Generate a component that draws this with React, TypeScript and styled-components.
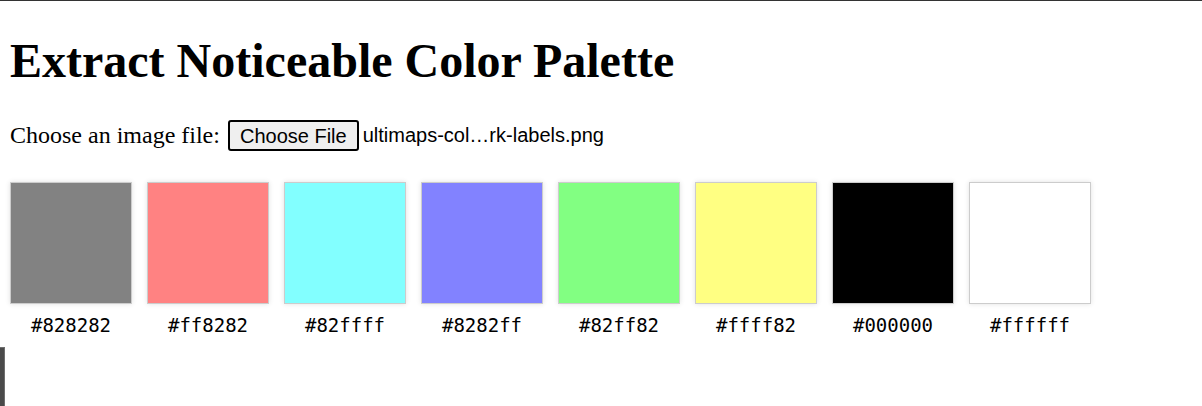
import React from "react";
import styled, { createGlobalStyle } from "styled-components";

const Global = createGlobalStyle`
  html, body { margin: 0; padding: 0; background: #fff; }
  body {
    border-top: 1px solid #333;
    font-family: "Liberation Serif", "Times New Roman", serif;
    font-size: 24px;
    color: #000;
    min-height: 405px;
    overflow: hidden;
  }
`;

const Page = styled.div`
  padding: 0 10px;
`;

const Title = styled.h1`
  font-size: 48px;
  font-weight: bold;
  margin: 32px 0 32px;
  line-height: normal;
`;

const FileRow = styled.div`
  display: flex;
  align-items: center;
  gap: 8px;
`;

const FileButton = styled.button`
  font-family: "Liberation Sans", Arial, sans-serif;
  font-size: 20px;
  height: 31px;
  padding: 0 10px;
  background: #efefef;
  border: 2px solid #000;
  border-radius: 3px;
  color: #000;
  line-height: 1;
`;

const FileName = styled.span`
  font-family: "Liberation Sans", Arial, sans-serif;
  font-size: 20px;
  margin-left: -4px;
`;

const Palette = styled.div`
  display: flex;
  gap: 15px;
  margin-top: 31px;
`;

const Item = styled.div`
  display: flex;
  flex-direction: column;
  align-items: center;
  gap: 10px;
`;

const Swatch = styled.div<{ $color: string }>`
  width: 120px;
  height: 120px;
  border: 1px solid #ccc;
  background: ${(p) => p.$color};
  box-shadow: 0 0 5px rgba(0, 0, 0, 0.12);
`;

const Hex = styled.span`
  font-family: "DejaVu Sans Mono", monospace;
  font-size: 19px;
`;

const EdgeBar = styled.div`
  position: absolute;
  left: 0;
  top: 347px;
  width: 4px;
  height: 60px;
  background: #4a4a4a;
  border: 1px solid #6e6e6e;
  border-left: none;
`;

const colors = [
  "#828282",
  "#ff8282",
  "#82ffff",
  "#8282ff",
  "#82ff82",
  "#ffff82",
  "#000000",
  "#ffffff",
];

export default function App() {
  return (
    <>
      <Global />
      <Page>
        <Title>Extract Noticeable Color Palette</Title>
        <FileRow>
          <span>Choose an image file:</span>
          <FileButton>Choose File</FileButton>
          <FileName>ultimaps-col…rk-labels.png</FileName>
        </FileRow>
        <Palette>
          {colors.map((c) => (
            <Item key={c}>
              <Swatch $color={c} />
              <Hex>{c}</Hex>
            </Item>
          ))}
        </Palette>
      </Page>
      <EdgeBar />
    </>
  );
}
